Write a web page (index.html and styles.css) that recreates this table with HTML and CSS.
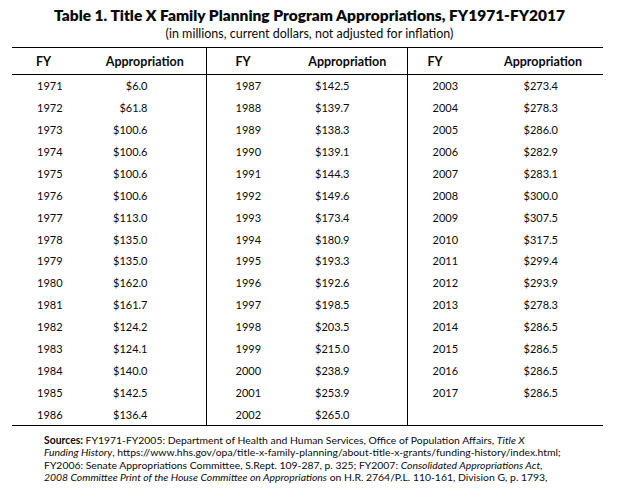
FILE: index.html
```
<!DOCTYPE html>
<html>
<head>
<meta charset="utf-8">
<link rel="stylesheet" href="styles.css">
</head>
<body>
<div class="page">
  <h1 class="title">Table 1. Title X Family Planning Program Appropriations, FY1971-FY2017</h1>
  <p class="subtitle">(in millions, current dollars, not adjusted for inflation)</p>
  <table class="approp">
    <colgroup>
      <col class="c-fy1"><col class="c-ap1"><col class="c-fy2"><col class="c-ap2"><col class="c-fy3"><col class="c-ap3">
    </colgroup>
    <thead>
      <tr>
        <th class="fy g1">FY</th><th class="ap g1 sep">Appropriation</th>
        <th class="fy g2">FY</th><th class="ap g2 sep">Appropriation</th>
        <th class="fy g3">FY</th><th class="ap g3">Appropriation</th>
      </tr>
    </thead>
    <tbody>
      <tr><td class="fy g1">1971</td><td class="ap g1 sep">$6.0</td><td class="fy g2">1987</td><td class="ap g2 sep">$142.5</td><td class="fy g3">2003</td><td class="ap g3">$273.4</td></tr>
      <tr><td class="fy g1">1972</td><td class="ap g1 sep">$61.8</td><td class="fy g2">1988</td><td class="ap g2 sep">$139.7</td><td class="fy g3">2004</td><td class="ap g3">$278.3</td></tr>
      <tr><td class="fy g1">1973</td><td class="ap g1 sep">$100.6</td><td class="fy g2">1989</td><td class="ap g2 sep">$138.3</td><td class="fy g3">2005</td><td class="ap g3">$286.0</td></tr>
      <tr><td class="fy g1">1974</td><td class="ap g1 sep">$100.6</td><td class="fy g2">1990</td><td class="ap g2 sep">$139.1</td><td class="fy g3">2006</td><td class="ap g3">$282.9</td></tr>
      <tr><td class="fy g1">1975</td><td class="ap g1 sep">$100.6</td><td class="fy g2">1991</td><td class="ap g2 sep">$144.3</td><td class="fy g3">2007</td><td class="ap g3">$283.1</td></tr>
      <tr><td class="fy g1">1976</td><td class="ap g1 sep">$100.6</td><td class="fy g2">1992</td><td class="ap g2 sep">$149.6</td><td class="fy g3">2008</td><td class="ap g3">$300.0</td></tr>
      <tr><td class="fy g1">1977</td><td class="ap g1 sep">$113.0</td><td class="fy g2">1993</td><td class="ap g2 sep">$173.4</td><td class="fy g3">2009</td><td class="ap g3">$307.5</td></tr>
      <tr><td class="fy g1">1978</td><td class="ap g1 sep">$135.0</td><td class="fy g2">1994</td><td class="ap g2 sep">$180.9</td><td class="fy g3">2010</td><td class="ap g3">$317.5</td></tr>
      <tr><td class="fy g1">1979</td><td class="ap g1 sep">$135.0</td><td class="fy g2">1995</td><td class="ap g2 sep">$193.3</td><td class="fy g3">2011</td><td class="ap g3">$299.4</td></tr>
      <tr><td class="fy g1">1980</td><td class="ap g1 sep">$162.0</td><td class="fy g2">1996</td><td class="ap g2 sep">$192.6</td><td class="fy g3">2012</td><td class="ap g3">$293.9</td></tr>
      <tr><td class="fy g1">1981</td><td class="ap g1 sep">$161.7</td><td class="fy g2">1997</td><td class="ap g2 sep">$198.5</td><td class="fy g3">2013</td><td class="ap g3">$278.3</td></tr>
      <tr><td class="fy g1">1982</td><td class="ap g1 sep">$124.2</td><td class="fy g2">1998</td><td class="ap g2 sep">$203.5</td><td class="fy g3">2014</td><td class="ap g3">$286.5</td></tr>
      <tr><td class="fy g1">1983</td><td class="ap g1 sep">$124.1</td><td class="fy g2">1999</td><td class="ap g2 sep">$215.0</td><td class="fy g3">2015</td><td class="ap g3">$286.5</td></tr>
      <tr><td class="fy g1">1984</td><td class="ap g1 sep">$140.0</td><td class="fy g2">2000</td><td class="ap g2 sep">$238.9</td><td class="fy g3">2016</td><td class="ap g3">$286.5</td></tr>
      <tr><td class="fy g1">1985</td><td class="ap g1 sep">$142.5</td><td class="fy g2">2001</td><td class="ap g2 sep">$253.9</td><td class="fy g3">2017</td><td class="ap g3">$286.5</td></tr>
      <tr><td class="fy g1">1986</td><td class="ap g1 sep">$136.4</td><td class="fy g2">2002</td><td class="ap g2 sep">$265.0</td><td class="fy g3"></td><td class="ap g3"></td></tr>
    </tbody>
  </table>
  <p class="sources"><b>Sources:</b> FY1971-FY2005: Department of Health and Human Services, Office of Population Affairs, <i>Title X</i><br><i>Funding History</i>, https://www.hhs.gov/opa/title-x-family-planning/about-title-x-grants/funding-history/index.html;<br>FY2006: Senate Appropriations Committee, S.Rept. 109-287, p. 325; FY2007: <i>Consolidated Appropriations Act,</i><br><i>2008 Committee Print of the House Committee on Appropriations</i> on H.R. 2764/P.L. 110-161, Division G, p. 1793,</p>
</div>
</body>
</html>
```
FILE: styles.css
```
html, body {
  margin: 0;
  padding: 0;
  background: #ffffff;
}
body {
  font-family: "Lato", "Open Sans", sans-serif;
  color: #0a0a0a;
}
.page {
  width: 619px;
  height: 490px;
  overflow: hidden;
}
.title {
  margin: 0;
  padding-top: 5px;
  height: 20px;
  font-size: 15.5px;
  font-weight: 800;
  text-align: center;
  line-height: 20px;
}
.subtitle {
  margin: 0;
  height: 22px;
  font-size: 12.5px;
  line-height: 18px;
  text-align: center;
}
.approp {
  margin-left: 12px;
  width: 591px;
  border-collapse: collapse;
  table-layout: fixed;
  border-top: 1px solid #000;
  border-bottom: 1px solid #000;
  font-size: 11px;
}
.c-fy1 { width: 72px; }
.c-ap1 { width: 122px; }
.c-fy2 { width: 82px; }
.c-ap2 { width: 119px; }
.c-fy3 { width: 76px; }
.c-ap3 { width: 120px; }
.approp th {
  height: 26px;
  padding: 0;
  font-weight: 700;
  font-size: 12.5px;
  border-bottom: 1px solid #000;
}
.approp td {
  height: 21.875px;
  padding: 0;
}
.approp .sep {
  border-right: 1px solid #000;
}
.approp th.fy, .approp td.fy { text-align: left; }
.approp th.ap { text-align: center; }
.approp td.ap { text-align: right; }
.fy.g1 { padding-left: 25px; }
.fy.g2 { padding-left: 29px; }
.fy.g3 { padding-left: 25px; }
th.fy.g1 { padding-left: 24px; }
th.fy.g3 { padding-left: 20px; }
td.ap.g1 { padding-right: 58px; }
td.ap.g2 { padding-right: 57px; }
td.ap.g3 { padding-right: 45px; }
.sources {
  margin: 8px 0 0 44px;
  font-size: 10.4px;
  line-height: 12.4px;
  white-space: nowrap;
}
```
